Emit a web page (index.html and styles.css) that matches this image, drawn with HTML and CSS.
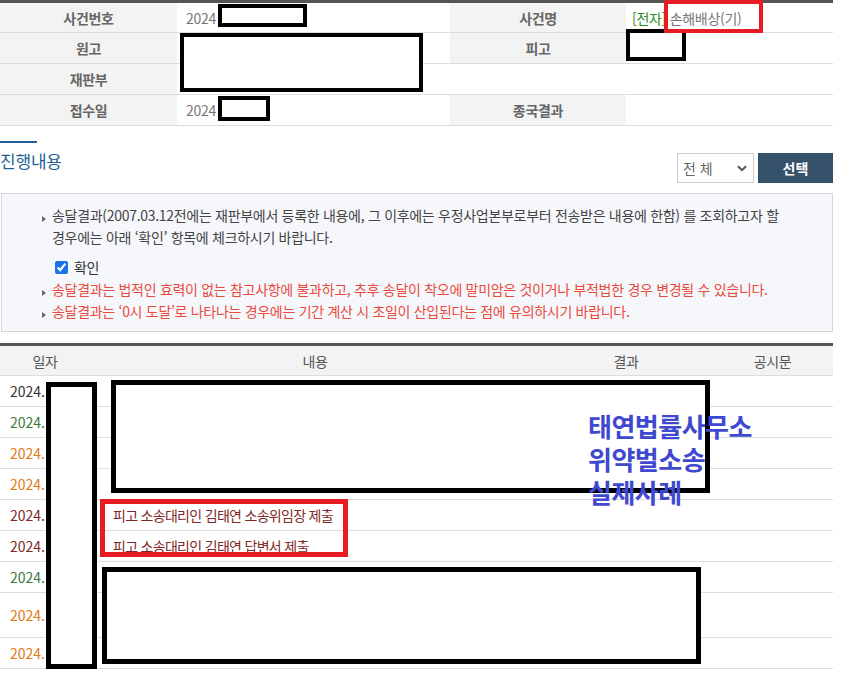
FILE: index.html
```html
<!DOCTYPE html>
<html lang="ko">
<head>
<meta charset="utf-8">
<title>사건 진행내용</title>
<link rel="stylesheet" href="styles.css">
</head>
<body>
<div class="page">
  <table class="info-table">
    <colgroup><col class="c1"><col class="c2"><col class="c3"><col class="c4"></colgroup>
    <tr><th>사건번호</th><td>2024</td><th>사건명</th><td><span class="green">[전자]</span> 손해배상(기)</td></tr>
    <tr><th>원고</th><td></td><th>피고</th><td></td></tr>
    <tr><th>재판부</th><td colspan="3"></td></tr>
    <tr><th>접수일</th><td>2024</td><th>종국결과</th><td></td></tr>
  </table>

  <div class="section-head">
    <h2 class="title">진행내용</h2>
    <div class="tools">
      <div class="select-wrap">
        <select class="select"><option>전 체</option></select>
        <svg class="chev" width="10" height="7" viewBox="0 0 10 7"><path d="M1 1.2 L5 5.2 L9 1.2" fill="none" stroke="#555" stroke-width="2"/></svg>
      </div>
      <button class="btn">선택</button>
    </div>
  </div>

  <div class="notice">
    <ul class="notes">
      <li><span>송달결과(2007.03.12전에는 재판부에서 등록한 내용에, 그 이후에는 우정사업본부로부터 전송받은 내용에 한함) 를 조회하고자 할<br>경우에는 아래 ‘확인’ 항목에 체크하시기 바랍니다.</span></li>
    </ul>
    <label class="check"><input type="checkbox" checked> 확인</label>
    <ul class="notes red">
      <li><span>송달결과는 법적인 효력이 없는 참고사항에 불과하고, 추후 송달이 착오에 말미암은 것이거나 부적법한 경우 변경될 수 있습니다.</span></li>
      <li><span>송달결과는 ‘0시 도달’로 나타나는 경우에는 기간 계산 시 초일이 산입된다는 점에 유의하시기 바랍니다.</span></li>
    </ul>
  </div>

  <table class="list">
    <colgroup><col class="l1"><col class="l2"><col class="l3"><col class="l4"></colgroup>
    <thead><tr><th>일자</th><th>내용</th><th>결과</th><th>공시문</th></tr></thead>
    <tbody>
      <tr><td class="d black">2024.</td><td></td><td></td><td></td></tr>
      <tr><td class="d green2">2024.</td><td></td><td></td><td></td></tr>
      <tr><td class="d orange">2024.</td><td></td><td></td><td></td></tr>
      <tr><td class="d orange">2024.</td><td></td><td></td><td></td></tr>
      <tr><td class="d maroon">2024.</td><td class="txt maroon">피고 소송대리인 김태연 소송위임장 제출</td><td></td><td></td></tr>
      <tr><td class="d maroon">2024.</td><td class="txt maroon">피고 소송대리인 김태연 답변서 제출</td><td></td><td></td></tr>
      <tr><td class="d green2">2024.</td><td></td><td></td><td></td></tr>
      <tr class="tall"><td class="d orange">2024.</td><td></td><td></td><td></td></tr>
      <tr><td class="d orange">2024.</td><td></td><td></td><td></td></tr>
    </tbody>
  </table>

  <div class="mask" style="left:218px;top:4px;width:89px;height:23px"></div>
  <div class="mask" style="left:180px;top:33px;width:243px;height:59px"></div>
  <div class="mask" style="left:218px;top:96px;width:52px;height:25px"></div>
  <div class="mask" style="left:626px;top:29px;width:60px;height:32px"></div>
  <div class="mark" style="left:664px;top:0px;width:99px;height:33px"></div>
  <div class="mask thick" style="left:46px;top:382px;width:51px;height:287px"></div>
  <div class="mask thick" style="left:111px;top:380px;width:599px;height:113px"></div>
  <div class="mark thick" style="left:100px;top:499px;width:248px;height:58px"></div>
  <div class="mask thick" style="left:102px;top:567px;width:599px;height:97px"></div>
  <div class="watermark"><div>태연법률사무소</div><div>위약벌소송</div><div>실제사례</div></div>
</div>
</body>
</html>
```

FILE: styles.css
```css
* { box-sizing: border-box; }
html, body { margin: 0; padding: 0; background: #fff; }
body {
  font-family: "Noto Sans CJK KR", "Noto Sans", sans-serif;
  font-size: 14px;
  color: #333;
  letter-spacing: -0.3px;
}
.page { position: relative; width: 843px; height: 674px; overflow: hidden; }

.info-table {
  width: 833px;
  border-collapse: collapse;
  border-top: 3px solid #555;
  table-layout: fixed;
}
.info-table .c1 { width: 177px; }
.info-table .c2 { width: 273px; }
.info-table .c3 { width: 176px; }
.info-table .c4 { width: 207px; }
.info-table th, .info-table td {
  height: 31px;
  padding: 0;
  border-bottom: 1px solid #ddd;
  line-height: 20px;
}
.info-table th {
  background: #f3f3f3;
  color: #666;
  font-weight: 700;
  text-align: center;
}
.info-table td { padding-left: 9px; color: #777; }
.info-table td .green { color: #2a8a2a; }
.info-table td:last-child { padding-left: 6px; }

.section-head {
  display: flex;
  justify-content: space-between;
  align-items: flex-start;
  width: 833px;
  margin-top: 15px;
}
.title {
  margin: 0;
  font-size: 17px;
  font-weight: 400;
  color: #235f95;
  line-height: 20px;
  letter-spacing: -0.2px;
}
.title::before {
  content: "";
  display: block;
  width: 37px;
  height: 2px;
  background: #1f5fa0;
  margin-bottom: 8px;
}
.tools { display: flex; gap: 4px; margin-top: 12px; }
.select-wrap { position: relative; width: 77px; height: 30px; }
.select {
  appearance: none;
  -webkit-appearance: none;
  width: 77px;
  height: 30px;
  border: 1px solid #ccc;
  background: #fff;
  color: #666;
  font-family: inherit;
  font-size: 14px;
  padding: 0 0 0 5px;
  border-radius: 0;
}
.chev { position: absolute; right: 7px; top: 12px; }
.btn {
  width: 75px;
  height: 30px;
  border: 0;
  background: #36516a;
  color: #fff;
  font-family: inherit;
  font-size: 14px;
  font-weight: 700;
  padding: 0;
}

.notice {
  margin: 10px 0 0 1px;
  width: 832px;
  background: #f6f7fb;
  border: 1px solid #d5d6da;
  padding: 10px 0 9px 36px;
  line-height: 22px;
  color: #444;
}
.notes { list-style: none; margin: 0; padding: 0; }
.notes li { display: flex; }
.notes li::before {
  content: "";
  flex: none;
  width: 0; height: 0;
  border-left: 4px solid #666;
  border-top: 3px solid transparent;
  border-bottom: 3px solid transparent;
  margin: 12px 6px 0 4px;
}
.notes.red { color: #e94a3b; }
.check {
  display: flex;
  align-items: center;
  gap: 6px;
  margin: 8px 0 0 17px;
  color: #333;
}
.check input { width: 13px; height: 13px; margin: 0; accent-color: #1a73e8; }

.list {
  width: 833px;
  border-collapse: collapse;
  table-layout: fixed;
  margin-top: 11px;
  border-top: 3px solid #555;
}
.list .l1 { width: 90px; }
.list .l2 { width: 450px; }
.list .l3 { width: 172px; }
.list .l4 { width: 121px; }
.list th {
  height: 31px;
  background: #f3f3f3;
  color: #555;
  font-weight: 400;
  border-bottom: 1px solid #ddd;
  padding: 0;
}
.list td {
  height: 31px;
  border-bottom: 1px solid #ddd;
  padding: 0;
  line-height: 20px;
}
.list tr.tall td { height: 45px; }
.list td.d { padding-left: 10px; letter-spacing: 0; }
.list td.txt { padding-left: 23px; letter-spacing: -0.7px; }
.black { color: #333; }
.green2 { color: #3c7a3c; }
.orange { color: #e07a12; }
.maroon { color: #7e2727; }

.mask {
  position: absolute;
  background: #fff;
  border: 4px solid #000;
}
.mask.thick { border-width: 5px; }
.mark {
  position: absolute;
  border: 4px solid #e81c24;
}
.mark.thick { border-width: 5px; }
.watermark {
  position: absolute;
  left: 588px;
  top: 409px;
  font-size: 26px;
  font-weight: 700;
  line-height: 33px;
  color: #3f49d0;
  letter-spacing: -0.5px;
}
```
